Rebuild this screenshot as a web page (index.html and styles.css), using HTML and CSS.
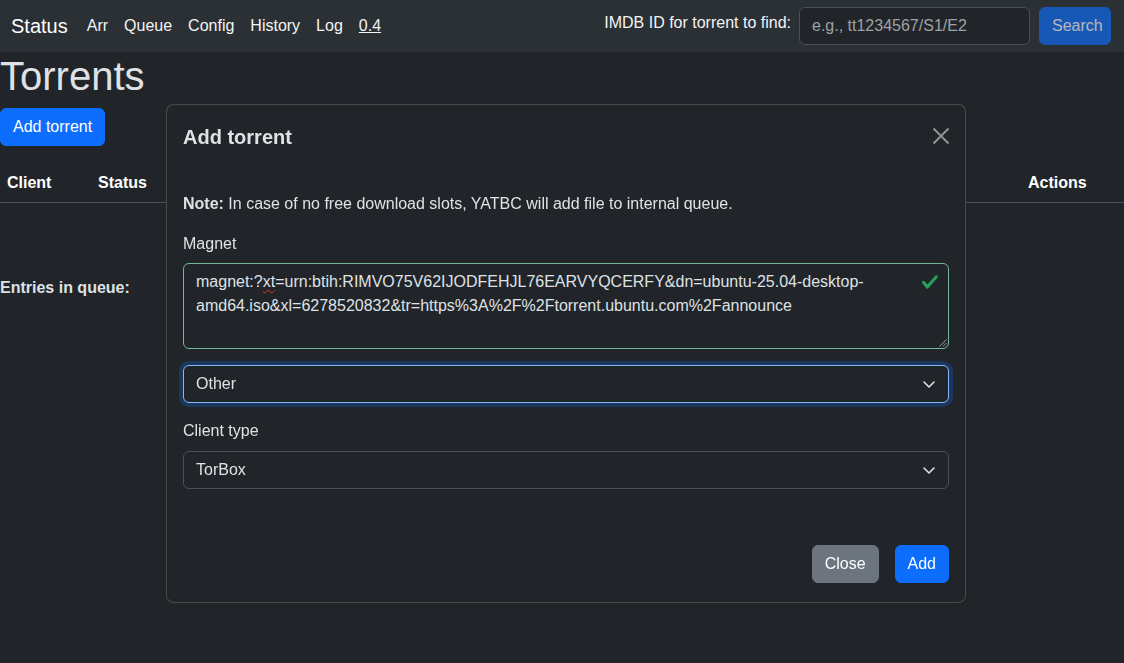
FILE: index.html
```html
<!DOCTYPE html>
<html lang="en">
<head>
<meta charset="utf-8">
<title>Torrents</title>
<link rel="stylesheet" href="styles.css">
</head>
<body>
<nav class="navbar">
  <div class="nav-left">
    <a class="brand" href="#">Status</a>
    <ul class="nav-links">
      <li><a href="#">Arr</a></li>
      <li><a href="#">Queue</a></li>
      <li><a href="#">Config</a></li>
      <li><a href="#">History</a></li>
      <li><a href="#">Log</a></li>
      <li><a href="#" class="version">0.4</a></li>
    </ul>
  </div>
  <form class="nav-search">
    <label for="imdb" class="nav-label">IMDB ID for torrent to find:</label>
    <input id="imdb" class="form-control nav-input" placeholder="e.g., tt1234567/S1/E2">
    <button type="button" class="btn btn-primary btn-search" disabled>Search</button>
  </form>
</nav>

<main class="page">
  <h1 class="page-title">Torrents</h1>
  <button type="button" class="btn btn-primary">Add torrent</button>
  <table class="table">
    <colgroup>
      <col class="w-client"><col class="w-status"><col class="w-name"><col class="w-progress"><col class="w-size"><col class="w-actions">
    </colgroup>
    <thead>
      <tr><th>Client</th><th>Status</th><th>Name</th><th>Progress</th><th>Size</th><th>Actions</th></tr>
    </thead>
    <tbody></tbody>
  </table>
  <p class="queue"><strong>Entries in queue:</strong></p>
</main>

<div class="modal" role="dialog" aria-labelledby="modal-title">
  <div class="modal-content">
    <div class="modal-header">
      <h5 class="modal-title" id="modal-title">Add torrent</h5>
      <button type="button" class="btn-close" aria-label="Close">
        <svg width="18" height="18" viewBox="0 0 18 18"><path d="M1.5 1.5 16.5 16.5M16.5 1.5 1.5 16.5" stroke="currentColor" stroke-width="2" fill="none"/></svg>
      </button>
    </div>
    <div class="modal-body">
      <p class="note"><strong>Note:</strong> In case of no free download slots, YATBC will add file to internal queue.</p>
      <div class="field">
        <label class="form-label">Magnet</label>
        <div class="textarea-wrap">
          <div class="form-control textarea is-valid" role="textbox" aria-multiline="true">magnet:?<span class="misspelled">xt</span>=urn:btih:RIMVO75V62IJODFEHJL76EARVYQCERFY&amp;dn=ubuntu-25.04-desktop-amd64.iso&amp;xl=6278520832&amp;tr=https%3A%2F%2Ftorrent.ubuntu.com%2Fannounce</div>
          <svg class="valid-icon" width="18" height="18" viewBox="0 0 8 8"><path fill="#23a05a" d="M2.3 6.73.6 4.53c-.4-1.04.46-1.4 1.1-.8l1.1 1.4 3.4-3.8c.6-.63 1.6-.27 1.2.7l-4 4.6c-.43.5-.8.4-1.1.1z"/></svg>
          <svg class="grip" width="9" height="9" viewBox="0 0 9 9"><path d="M8.5 1.5 1.5 8.5M8.5 5 5 8.5" stroke="#9a9da0" stroke-width="1" fill="none"/></svg>
        </div>
      </div>
      <div class="field">
        <div class="select-wrap">
          <select class="form-select focused"><option>Other</option></select>
          <svg class="chevron" width="16" height="16" viewBox="0 0 16 16"><path d="m3 6 5 5 5-5" stroke="#dee2e6" stroke-width="1.6" stroke-linecap="round" stroke-linejoin="round" fill="none"/></svg>
        </div>
      </div>
      <div class="field">
        <label class="form-label">Client type</label>
        <div class="select-wrap">
          <select class="form-select"><option>TorBox</option></select>
          <svg class="chevron" width="16" height="16" viewBox="0 0 16 16"><path d="m3 6 5 5 5-5" stroke="#dee2e6" stroke-width="1.6" stroke-linecap="round" stroke-linejoin="round" fill="none"/></svg>
        </div>
      </div>
    </div>
    <div class="modal-footer">
      <button type="button" class="btn btn-secondary">Close</button>
      <button type="button" class="btn btn-primary">Add</button>
    </div>
  </div>
</div>
</body>
</html>
```

FILE: styles.css
```css
* { box-sizing: border-box; }

html, body { margin: 0; }

body {
  background: #212529;
  color: #dee2e6;
  font-family: "Segoe UI", "Liberation Sans", Arial, sans-serif;
  font-size: 16px;
  line-height: 1.5;
  height: 663px;
  overflow: hidden;
}

/* ---------- navbar ---------- */
.navbar {
  display: flex;
  align-items: center;
  justify-content: space-between;
  height: 52px;
  padding: 0 13px 0 11px;
  background: #2b3035;
}
.nav-left { display: flex; align-items: center; }
.brand {
  font-size: 20px;
  line-height: 30px;
  color: #fff;
  text-decoration: none;
  margin-right: 11px;
}
.nav-links { display: flex; list-style: none; margin: 0; padding: 0; }
.nav-links a {
  display: block;
  padding: 8px;
  color: #f3f4f5;
  text-decoration: none;
}
.nav-links a.version { text-decoration: underline; }

.nav-search { display: flex; align-items: center; }
.nav-label { margin: 0 8px 7px 0; color: #f3f4f5; }
.nav-input { width: 231px; margin-right: 9px; }
.btn-search { width: 72px; padding: 6px 0; text-align: center; }

/* ---------- form controls ---------- */
.form-control, .form-select {
  display: block;
  height: 38px;
  padding: 6px 12px;
  font: inherit;
  color: #dee2e6;
  background: #212529;
  border: 1px solid #495057;
  border-radius: 6px;
  outline: none;
}
.form-control::placeholder { color: #9ea2a6; }

.btn {
  display: inline-block;
  height: 38px;
  padding: 6px 12px;
  font: inherit;
  line-height: 24px;
  border: 1px solid transparent;
  border-radius: 6px;
  color: #fff;
  cursor: pointer;
}
.btn-primary { background: #0d6efd; border-color: #0d6efd; }
.btn-primary:disabled { opacity: .65; }
.btn-secondary { background: #6c757d; border-color: #6c757d; }

/* ---------- page ---------- */
.page { padding: 0; }
.page-title {
  margin: 0 0 8px;
  font-size: 40px;
  line-height: 48px;
  font-weight: 500;
  color: #dee2e6;
}
.table {
  width: 100%;
  margin-top: 16px;
  border-collapse: collapse;
  table-layout: fixed;
  color: #fff;
}
.table th {
  text-align: left;
  padding: 9px 8px 7px 7px;
  font-weight: 700;
  border-bottom: 1px solid #495057;
}
.w-client { width: 91px; }
.w-status { width: 90px; }
.w-name { width: 500px; }
.w-progress { width: 170px; }
.w-size { width: 170px; }
.w-actions { width: 103px; }

.queue { margin: 73px 0 0; }

/* ---------- modal ---------- */
.modal {
  position: fixed;
  top: 104px;
  left: 166px;
  width: 800px;
}
.modal-content {
  background: #212529;
  border: 1px solid rgba(255, 255, 255, .175);
  border-radius: 8px;
}
.modal-header {
  display: flex;
  align-items: center;
  padding: 17px 16px 15px;
}
.modal-title {
  margin: 0;
  font-size: 20px;
  line-height: 30px;
  font-weight: 700;
}
.btn-close {
  margin-left: auto;
  margin-right: -1px;
  margin-top: -2px;
  padding: 0;
  width: 18px;
  height: 18px;
  border: 0;
  background: none;
  color: #909294;
  display: flex;
}
.modal-body { padding: 25px 16px 16px; }
.note { margin: 0 0 16px; }
.field { margin-bottom: 16px; }
.form-label { display: block; margin-bottom: 8px; }

.textarea-wrap, .select-wrap { position: relative; }
.textarea {
  height: 86px;
  margin-top: -1px;
  padding-right: 36px;
  word-wrap: break-word;
}
.is-valid { border-color: #75b798; }
.misspelled {
  text-decoration: underline wavy #e03030;
  text-decoration-skip-ink: none;
  text-underline-offset: 2px;
  text-decoration-thickness: 1px;
}
.valid-icon { position: absolute; top: 10px; right: 10px; }
.grip { position: absolute; right: 2px; bottom: 2px; }

.form-select {
  width: 100%;
  appearance: none;
  -webkit-appearance: none;
  padding-right: 36px;
}
.form-select.focused {
  border-color: #86b7fe;
  box-shadow: 0 0 0 4px rgba(13, 110, 253, .25);
}
.chevron {
  position: absolute;
  right: 12px;
  top: 11px;
  pointer-events: none;
}

.modal-footer {
  display: flex;
  justify-content: flex-end;
  gap: 16px;
  padding: 24px 16px 19px;
}
```
